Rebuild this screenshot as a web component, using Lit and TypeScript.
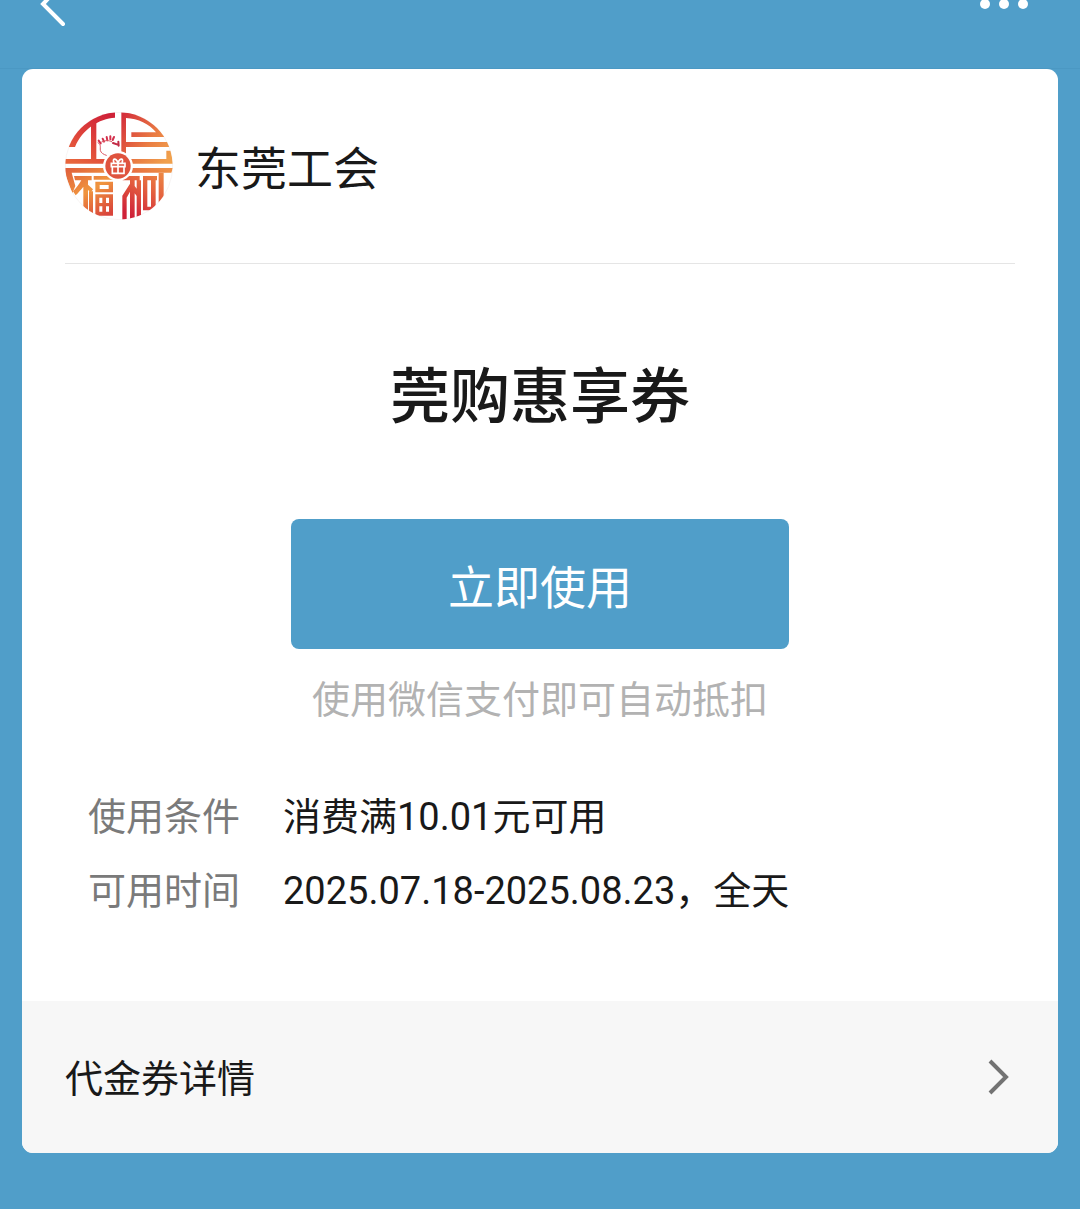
import { LitElement, html, css, svg } from "lit";
import { customElement } from "lit/decorators.js";

const emblem = svg`
  <defs>
    <linearGradient id="tl" gradientUnits="userSpaceOnUse" x1="150" y1="30" x2="60" y2="180">
      <stop offset="0" stop-color="#cf2238"/><stop offset=".55" stop-color="#df453b"/><stop offset="1" stop-color="#e8653c"/>
    </linearGradient>
    <linearGradient id="tr" gradientUnits="userSpaceOnUse" x1="195" y1="40" x2="345" y2="150">
      <stop offset="0" stop-color="#d42f3b"/><stop offset=".6" stop-color="#ea7c43"/><stop offset="1" stop-color="#f0a04c"/>
    </linearGradient>
    <linearGradient id="bl" gradientUnits="userSpaceOnUse" x1="40" y1="190" x2="130" y2="345">
      <stop offset="0" stop-color="#e0603c"/><stop offset=".5" stop-color="#f0963f"/><stop offset="1" stop-color="#d9443a"/>
    </linearGradient>
    <linearGradient id="br" gradientUnits="userSpaceOnUse" x1="330" y1="195" x2="240" y2="345">
      <stop offset="0" stop-color="#ee9146"/><stop offset=".45" stop-color="#e4623f"/><stop offset="1" stop-color="#cf2138"/>
    </linearGradient>
    <clipPath id="disc"><circle cx="188" cy="186" r="161"/></clipPath>
  </defs>
  <circle cx="188" cy="186" r="161" fill="none" stroke="#f3efed" stroke-width="2"/>
  <g clip-path="url(#disc)">
    <g fill="url(#tl)">
      <path d="M176 25V41C128 44 78 75 56 129H25C42 70 100 27 176 25Z" />
      <path d="M104 57L120 48V165H150L148 179H25V165H104Z"/>
    </g>
    <g fill="url(#tr)">
      <path d="M195 25C255 25 305 58 329 99H225V85H299C278 59 246 44 209 42V114H342L347 129H209V156L195 150Z"/>
      <path d="M222 165H330V140H344L350 179H224Z"/>
    </g>
    <g fill="url(#bl)">
      <path d="M25 192H148L152 206H46L57 246L48 268L25 206Z"/>
      <path d="M53 216H106V229H95V322L81 314V248C73 258 66 266 58 274L50 262C60 252 68 241 75 229H56Z"/>
      <path d="M95 242L110 256L103 266L92 254Z"/>
      <path d="M112 216H175V227H112Z"/>
      <path fill-rule="evenodd" d="M117 233H170V265H117ZM130 243V255H157V243Z"/>
      <path fill-rule="evenodd" d="M117 271H170V335H117ZM129 281V297H138V281ZM149 281V297H158V281ZM129 307V323H138V307ZM149 307V323H158V307Z"/>
      <path d="M98 262H110V332L98 326Z"/>
    </g>
    <g fill="url(#br)">
      <path d="M224 192H350L345 206H221Z"/>
      <path d="M199 216H250V229H235V246L241 254V229H254V340L241 344V276L235 268V350H221V263L211 281V347H198V275L221 239V229H199Z"/>
      <path d="M260 216H302V229H273V308H284V229H298V319H260Z"/>
      <path d="M307 206H322V282L307 302Z"/>
    </g>
  </g>
  <g fill="none" stroke="#d3304c" stroke-linecap="round">
    <path stroke-width="6" d="M127 110L133 118M139 104L143 113M151 99L153 109M162 97L162 106M173 99L169 108"/>
    <path stroke-width="3" stroke="#dc5560" d="M125 116C135 122 131 128 132 139C134 147 141 151 150 154M136 114C149 108 158 109 166 113"/>
    <path stroke="#c22a45" stroke-width="6" d="M170 117L184 122M186 113L187 125"/>
  </g>
  <circle cx="185" cy="186" r="45" fill="#fff"/>
  <circle cx="185" cy="186" r="38" fill="#df533e"/>
  <path fill="none" stroke="#fff" stroke-width="5" d="M165 178H206V188H165ZM168 188V208H203V188M185 178V208M185 176C178 160 167 164 173 176M185 176C192 160 203 164 197 176"/>
`;

@customElement("app-root")
export class AppRoot extends LitElement {
  static styles = css`
    :host {
      display: block;
      min-height: 100vh;
      background: #509ec9;
      color: #191919;
      font-family: Roboto, "Noto Sans CJK SC", sans-serif;
      font-size: 38px;
      line-height: 74px;
    }
    * { box-sizing: border-box; }
    svg { display: block; }
    button { border: 0; padding: 0; background: none; font: inherit; color: inherit; cursor: pointer; }
    .bar {
      display: flex;
      justify-content: space-between;
      align-items: flex-start;
      height: 69px;
      padding: 0 48px 0 36px;
      overflow: hidden;
      border-bottom: 1px solid #4b98c3;
    }
    .card { margin: 0 22px; border-radius: 11px; overflow: hidden; background: #fff; }
    .brand {
      display: flex;
      align-items: center;
      gap: 22px;
      margin: 0 43px;
      padding: 43px 0;
      border-bottom: 1px solid #e5e5e5;
    }
    .name { padding-top: 6px; font-size: 46px; }
    .main { display: flex; flex-direction: column; align-items: center; padding: 90px 66px 73px; }
    h1 { margin: 0 0 77px; font-size: 60px; line-height: 88px; font-weight: 500; }
    .use {
      width: 498px;
      max-width: 100%;
      height: 130px;
      padding-top: 8px;
      border-radius: 8px;
      background: #509ec9;
      color: #fff;
      font-size: 46px;
    }
    .hint { margin: 14px 0 43px; color: #b2b2b2; }
    .terms { align-self: stretch; display: grid; grid-template-columns: auto 1fr; column-gap: 43px; margin: 0; }
    dt { color: #7a7a7a; }
    dd { margin: 0; }
    .details {
      display: flex;
      justify-content: space-between;
      align-items: center;
      height: 152px;
      padding: 4px 48px 0 43px;
      background: #f7f7f7;
      color: inherit;
      text-decoration: none;
    }
  `;

  render() {
    return html`
      <header class="bar">
        <button aria-label="返回">
          <svg width="32" height="30" viewBox="0 0 32 30" fill="none" stroke="#fff" stroke-width="4" stroke-linecap="round">
            <path d="M27 -17L7 4L27 24" />
          </svg>
        </button>
        <button aria-label="更多">
          <svg width="56" height="12" viewBox="0 0 56 12" fill="#fff">
            <circle cx="9" cy="4" r="5" /><circle cx="28" cy="4" r="5" /><circle cx="47" cy="4" r="5" />
          </svg>
        </button>
      </header>
      <main class="card">
        <div class="brand">
          <svg width="108" height="108" viewBox="26 24 324 324" aria-hidden="true">${emblem}</svg>
          <span class="name">东莞工会</span>
        </div>
        <section class="main">
          <h1>莞购惠享券</h1>
          <button class="use">立即使用</button>
          <p class="hint">使用微信支付即可自动抵扣</p>
          <dl class="terms">
            <dt>使用条件</dt>
            <dd>消费满10.01元可用</dd>
            <dt>可用时间</dt>
            <dd>2025.07.18-2025.08.23，全天</dd>
          </dl>
        </section>
        <a class="details" href="#details">
          <span>代金券详情</span>
          <svg width="24" height="40" viewBox="0 0 24 40" fill="none" stroke="#737373" stroke-width="4">
            <path d="M4 2L20 18L4 34" />
          </svg>
        </a>
      </main>
    `;
  }
}
